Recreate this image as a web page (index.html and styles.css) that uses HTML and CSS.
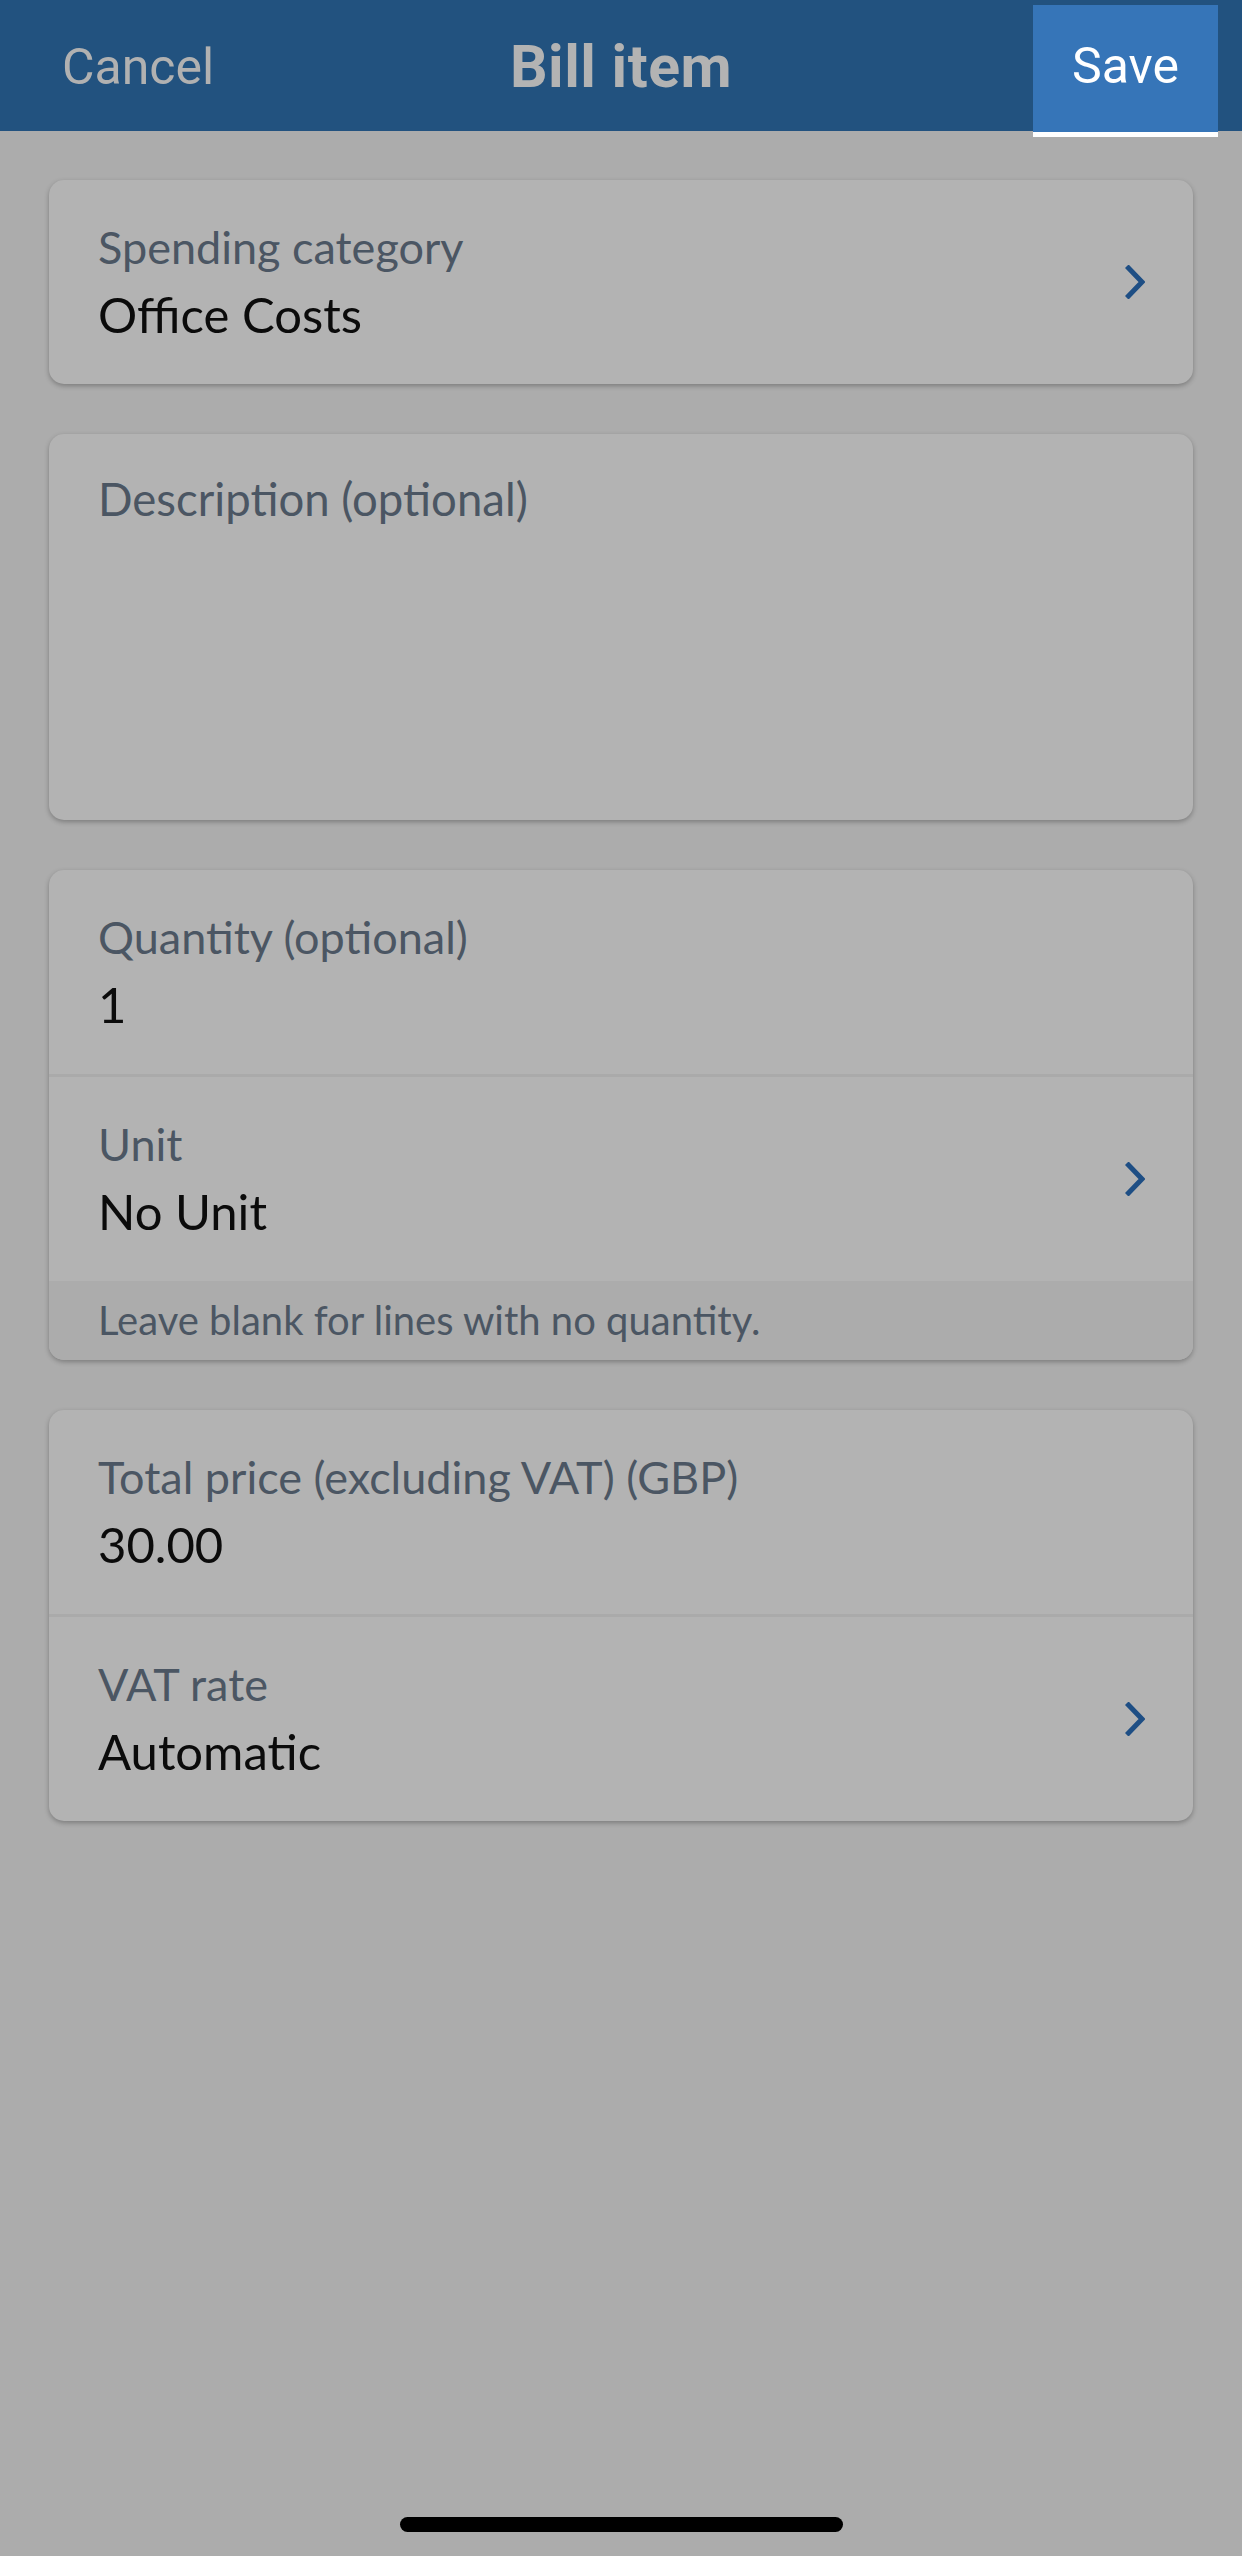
FILE: index.html
```html
<!DOCTYPE html>
<html lang="en">
<head>
<meta charset="utf-8">
<title>Bill item</title>
<link rel="stylesheet" href="styles.css">
</head>
<body>
<div class="screen">
  <header class="nav">
    <div class="nav-left"><span class="cancel">Cancel</span></div>
    <div class="nav-title">Bill item</div>
    <div class="nav-right"><button class="save">Save</button></div>
  </header>

  <main class="content">
    <section class="card">
      <div class="row">
        <div class="field">
          <div class="label">Spending category</div>
          <div class="value">Office Costs</div>
        </div>
        <svg class="chevron" viewBox="0 0 20 34" aria-hidden="true"><path d="M3.5 3 L17 17 L3.5 31" /></svg>
      </div>
    </section>

    <section class="card card-desc">
      <div class="desc-label">Description (optional)</div>
    </section>

    <section class="card">
      <div class="row">
        <div class="field">
          <div class="label">Quantity (optional)</div>
          <div class="value">1</div>
        </div>
      </div>
      <div class="row row-divided">
        <div class="field">
          <div class="label">Unit</div>
          <div class="value">No Unit</div>
        </div>
        <svg class="chevron" viewBox="0 0 20 34" aria-hidden="true"><path d="M3.5 3 L17 17 L3.5 31" /></svg>
      </div>
      <div class="card-footer">Leave blank for lines with no quantity.</div>
    </section>

    <section class="card">
      <div class="row">
        <div class="field">
          <div class="label">Total price (excluding VAT) (GBP)</div>
          <div class="value">30.00</div>
        </div>
      </div>
      <div class="row row-divided">
        <div class="field">
          <div class="label">VAT rate</div>
          <div class="value">Automatic</div>
        </div>
        <svg class="chevron" viewBox="0 0 20 34" aria-hidden="true"><path d="M3.5 3 L17 17 L3.5 31" /></svg>
      </div>
    </section>
  </main>

  <div class="home-area"><div class="home-indicator"></div></div>
</div>
</body>
</html>
```

FILE: styles.css
```css
* { box-sizing: border-box; }

html, body {
  margin: 0;
  padding: 0;
}

body {
  width: 1242px;
  height: 2556px;
  overflow: hidden;
  background: #acacac;
}

.screen {
  display: flex;
  flex-direction: column;
  height: 2556px;
}

.nav {
  height: 131px;
  flex: 0 0 131px;
  background: #22527f;
  display: grid;
  grid-template-columns: 1fr auto 1fr;
  align-items: start;
  font-family: Roboto, "Liberation Sans", sans-serif;
}

.nav-left {
  height: 131px;
  display: flex;
  align-items: center;
  padding-left: 62px;
}

.cancel {
  color: #b1b1b1;
  font-size: 50px;
  line-height: 1;
  padding-top: 2px;
}

.nav-title {
  height: 131px;
  display: flex;
  align-items: center;
  color: #b3b3b3;
  font-size: 59px;
  font-weight: 700;
  letter-spacing: 0.5px;
  padding-top: 2px;
}

.nav-right {
  display: flex;
  justify-content: flex-end;
  padding-right: 24px;
  padding-top: 5px;
}

.save {
  width: 185px;
  height: 132px;
  margin: 0;
  border: none;
  border-bottom: 5px solid #ffffff;
  background: #3675b8;
  color: #ffffff;
  font-family: Roboto, "Liberation Sans", sans-serif;
  font-size: 50px;
  line-height: 1;
  padding: 0 0 6px 0;
}

.content {
  flex: 1;
  display: flex;
  flex-direction: column;
  gap: 50px;
  padding: 49px 49px 0 49px;
  font-family: Lato, "Noto Sans", sans-serif;
}

.card {
  background: #b3b3b3;
  border-radius: 15px;
  box-shadow: 0 2px 5px rgba(0, 0, 0, 0.28);
  overflow: hidden;
}

.row {
  height: 204px;
  display: flex;
  align-items: center;
  justify-content: space-between;
  padding: 0 48px 0 49px;
}

.row-divided {
  height: 207px;
  border-top: 3px solid #aaaaaa;
}

.field {
  display: flex;
  flex-direction: column;
}

.label {
  color: #4b5663;
  font-size: 45px;
  line-height: 60px;
}

.value {
  color: #0b0b0b;
  font-size: 49px;
  line-height: 68px;
  margin-top: 3px;
}

.chevron {
  width: 20px;
  height: 34px;
  flex: 0 0 20px;
  fill: none;
  stroke: #1e4e84;
  stroke-width: 5;
  stroke-linecap: square;
  stroke-linejoin: miter;
}

.card-desc {
  height: 386px;
  padding: 35px 49px 0 49px;
}

.desc-label {
  color: #4b5663;
  font-size: 45.5px;
  line-height: 60px;
}

.card-footer {
  height: 79px;
  background: #acacac;
  color: #4b5663;
  font-size: 40px;
  line-height: 79px;
  padding: 0 49px;
}

.home-area {
  display: flex;
  justify-content: center;
  padding-bottom: 24px;
}

.home-indicator {
  width: 443px;
  height: 15px;
  border-radius: 8px;
  background: #000000;
}
```
